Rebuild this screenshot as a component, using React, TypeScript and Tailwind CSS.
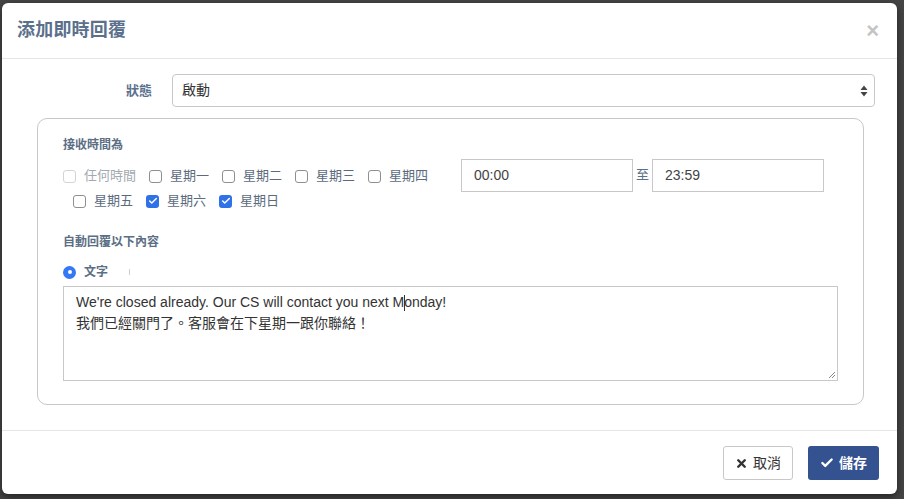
import { Check, X } from 'lucide-react';

const font = { fontFamily: '"Liberation Sans", "Noto Sans CJK TC", sans-serif' };

function Box({ checked, disabled }: { checked?: boolean; disabled?: boolean }) {
  if (checked) {
    return (
      <span className="w-[13px] h-[13px] rounded-[3px] bg-[#2f72e8] flex items-center justify-center shrink-0">
        <Check size={10} strokeWidth={3.5} className="text-white" />
      </span>
    );
  }
  return (
    <span
      className={`w-[13px] h-[13px] rounded-[3px] border bg-white shrink-0 ${disabled ? 'border-[#d4d4d4]' : 'border-[#8f8f8f]'}`}
    />
  );
}

function Day({ label, checked, disabled }: { label: string; checked?: boolean; disabled?: boolean }) {
  return (
    <label className="flex items-center gap-[8px] mr-[13px]">
      <Box checked={checked} disabled={disabled} />
      <span className={`text-[13px] ${disabled ? 'text-[#a3a9b0]' : 'text-[#5a6b7d]'}`}>{label}</span>
    </label>
  );
}

export default function App() {
  return (
    <div className="w-[904px] h-[499px] bg-[#454545] pt-[3px] pl-[2px] overflow-hidden" style={font}>
      <div className="w-[895px] h-[491px] bg-white rounded-[6px] flex flex-col shadow-[0_3px_9px_rgba(0,0,0,0.5)]">
        {/* header */}
        <div className="h-[56px] flex items-center justify-between pl-[15px] pr-[18px] border-b border-[#e5e5e5] shrink-0">
          <h4 className="text-[18px] font-semibold text-[#5b708c] tracking-[0.2px]">添加即時回覆</h4>
          <span className="text-[22px] font-bold text-[#c4c4c4] leading-none">×</span>
        </div>

        {/* body */}
        <div className="flex-1 pt-[15px]">
          <div className="flex items-center">
            <div className="w-[150px] text-right text-[13px] font-bold text-[#5b708c]">狀態</div>
            <div className="ml-[20px] mr-[22px] flex-1 h-[33px] border border-[#c8c8c8] rounded-[4px] flex items-center justify-between pl-[9px] pr-[6px]">
              <span className="text-[14px] text-[#333]">啟動</span>
              <svg width="8" height="12" viewBox="0 0 8 12">
                <path d="M4 0.5 L7.5 5 H0.5 Z" fill="#444" />
                <path d="M4 11.5 L7.5 7 H0.5 Z" fill="#444" />
              </svg>
            </div>
          </div>

          <div className="mt-[11px] ml-[35px] mr-[33px] h-[287px] border border-[#c8c8c8] rounded-[10px] pl-[25px] pr-[25px] pt-[17px]">
            <div className="text-[12px] font-bold text-[#5b6e84]">接收時間為</div>
            <div className="flex mt-[14px]">
              <div className="w-[398px]">
                <div className="flex items-center h-[16px]">
                  <Day label="任何時間" disabled />
                  <Day label="星期一" />
                  <Day label="星期二" />
                  <Day label="星期三" />
                  <Day label="星期四" />
                </div>
                <div className="flex items-center h-[16px] mt-[9px] pl-[10px]">
                  <Day label="星期五" />
                  <Day label="星期六" checked />
                  <Day label="星期日" checked />
                </div>
              </div>
              <div className="flex items-start -mt-[9px]">
                <div className="w-[172px] h-[33px] border border-[#c8c8c8] flex items-center pl-[12px] text-[14px] text-[#444]">00:00</div>
                <span className="text-[13px] text-[#5b708c] mx-[3px] mt-[6px]">至</span>
                <div className="w-[172px] h-[33px] border border-[#c8c8c8] flex items-center pl-[12px] text-[14px] text-[#444]">23:59</div>
              </div>
            </div>

            <div className="text-[12px] font-bold text-[#5b6e84] mt-[24px]">自動回覆以下內容</div>
            <div className="flex items-center mt-[13px] h-[16px]">
              <span className="w-[13px] h-[13px] rounded-full bg-[#3478f6] flex items-center justify-center">
                <span className="w-[4px] h-[4px] rounded-full bg-white" />
              </span>
              <span className="ml-[8px] text-[12px] font-bold text-[#5b6e84]">文字</span>
              <span className="ml-[21px] w-px h-[6px] bg-[#cfcfcf]" />
            </div>
            <div className="mt-[6px] h-[95px] border border-[#c8c8c8] px-[12px] pt-[5px] text-[14px] leading-[21px] text-[#333] relative">
              <div>
                We're closed already. Our CS will contact you next M
                <span className="relative">
                  <span className="absolute left-0 top-[1px] w-px h-[16px] bg-[#333]" />
                </span>
                onday!
              </div>
              <div>我們已經關門了。客服會在下星期一跟你聯絡！</div>
              <svg className="absolute right-[1px] bottom-[1px]" width="9" height="9" viewBox="0 0 9 9">
                <path d="M8 2 L2 8 M8 5 L5 8" stroke="#888" strokeWidth="1" />
              </svg>
            </div>
          </div>
        </div>

        {/* footer */}
        <div className="h-[64px] border-t border-[#e5e5e5] flex items-start justify-end gap-[15px] pt-[15px] pr-[18px] shrink-0">
          <button className="w-[70px] h-[34px] border border-[#c8c8c8] rounded-[3px] bg-white flex items-center justify-center gap-[5px] text-[14px] text-[#333]">
            <X size={13} strokeWidth={4.5} className="text-[#333]" />
            取消
          </button>
          <button className="w-[71px] h-[34px] rounded-[3px] bg-[#34528f] flex items-center justify-center gap-[5px] text-[14px] text-white font-bold">
            <Check size={14} strokeWidth={4} />
            儲存
          </button>
        </div>
      </div>
    </div>
  );
}
